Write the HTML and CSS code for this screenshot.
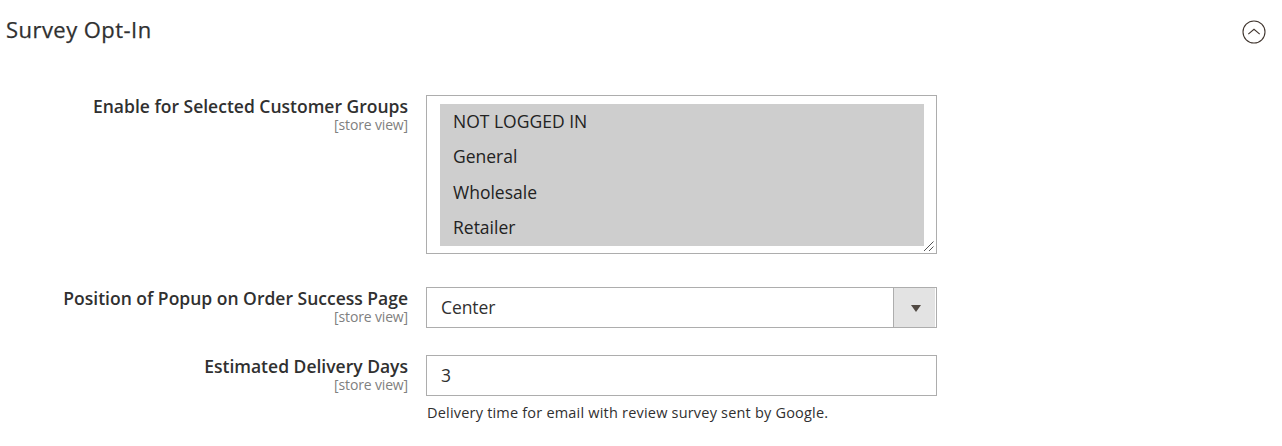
FILE: index.html
```html
<html>
<head>
    <title>Survey Opt-In</title>
    <link rel="stylesheet" href="styles.css">
</head>
<body>
    <div class="section-head">
        <h2 class="section-title">Survey Opt-In</h2>
        <svg class="toggle" width="24" height="24" viewBox="0 0 24 24">
            <circle cx="12" cy="12" r="11" />
            <path d="M6.3 14.2 L12 9.3 L17.7 14.2" />
        </svg>
    </div>

    <div class="field field-groups">
        <div class="label">
            <span class="name">Enable for Selected Customer Groups</span>
            <span class="scope">[store view]</span>
        </div>
        <div class="control multiselect">
            <div class="options">
                <div class="option">NOT LOGGED IN</div>
                <div class="option">General</div>
                <div class="option">Wholesale</div>
                <div class="option">Retailer</div>
            </div>
            <svg class="resizer" width="12" height="12" viewBox="0 0 12 12">
                <path d="M1 11 L10.5 1.5 M6 11 L10.5 6.5" />
            </svg>
        </div>
    </div>

    <div class="field field-position">
        <div class="label">
            <span class="name">Position of Popup on Order Success Page</span>
            <span class="scope">[store view]</span>
        </div>
        <div class="control select">
            <span class="value">Center</span>
            <span class="arrow"></span>
        </div>
    </div>

    <div class="field field-days">
        <div class="label">
            <span class="name">Estimated Delivery Days</span>
            <span class="scope">[store view]</span>
        </div>
        <div class="column">
            <div class="control text"><span class="value">3</span></div>
            <div class="note">Delivery time for email with review survey sent by Google.</div>
        </div>
    </div>
</body>
</html>
```
FILE: styles.css
```css
* {
    box-sizing: border-box;
}
body {
    margin: 0;
    background-color: #fff;
    color: #303030;
    font-family: "Open Sans", sans-serif;
    overflow: hidden;
}
.section-head {
    display: flex;
    justify-content: space-between;
    height: 95px;
    padding: 14px 16px 0 6px;
}
.section-title {
    margin: 0;
    font-size: 22px;
    font-weight: 500;
    line-height: 30px;
    letter-spacing: 0.45px;
    -webkit-text-stroke: 0.25px #303030;
}
.toggle {
    margin-top: 6px;
}
.toggle circle,
.toggle path {
    fill: none;
    stroke: #41362f;
    stroke-width: 1.1;
}
.field {
    display: flex;
    gap: 18px;
}
.field-groups {
    height: 192px;
}
.field-position {
    height: 68px;
}
.label {
    width: 408px;
    display: flex;
    flex-direction: column;
    text-align: right;
}
.name {
    font-size: 17.5px;
    font-weight: 600;
    line-height: 22px;
}
.scope {
    color: #808080;
    font-size: 14px;
    line-height: 16px;
    letter-spacing: -0.15px;
}
.control {
    width: 511px;
    height: 41px;
    border: 1px solid #adadad;
    font-size: 17.5px;
}
.multiselect {
    position: relative;
    height: 159px;
    padding: 8px 12px 7px 13px;
}
.options {
    background-color: #cecece;
    color: #222;
}
.option {
    height: 35.4px;
    padding-left: 13px;
    line-height: 35px;
}
.resizer {
    position: absolute;
    right: 1px;
    bottom: 1px;
    fill: none;
    stroke: #555;
}
.select,
.text {
    display: flex;
    align-items: center;
    justify-content: space-between;
    padding-left: 14px;
}
.select {
    padding-right: 1px;
}
.value {
    padding-bottom: 2px;
    letter-spacing: -0.1px;
}
.arrow {
    display: flex;
    align-items: center;
    justify-content: center;
    width: 42px;
    height: 39px;
    padding: 2px 0 0 3px;
    border-left: 1px solid #adadad;
    background-color: #e3e3e3;
}
.arrow::after {
    content: "";
    border: 5px solid transparent;
    border-top: 7px solid #514943;
    border-bottom: 0;
}
.note {
    margin-top: 7px;
    padding-left: 1px;
    font-size: 14.5px;
    line-height: 20px;
    letter-spacing: 0.2px;
}
```
